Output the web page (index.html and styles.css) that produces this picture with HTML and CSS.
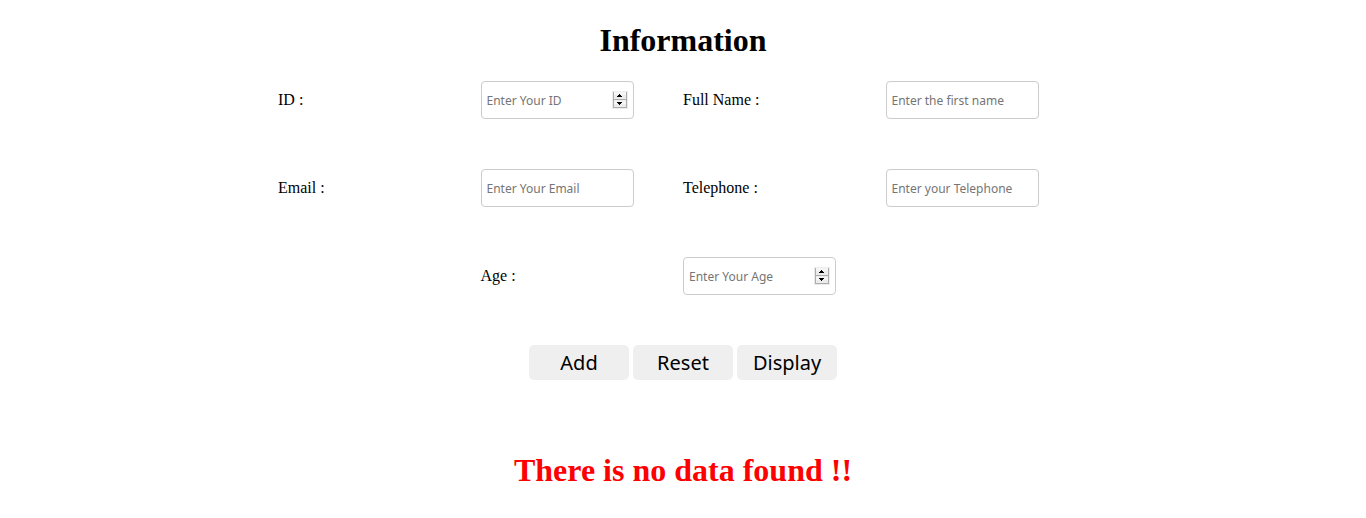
FILE: index.html
```html
<!DOCTYPE html>
<html lang="en">
<head>
<meta charset="utf-8">
<title>Information</title>
<meta name="viewport" content="width=device-width, initial-scale=1">
<link rel="stylesheet" href="styles.css">
</head>
<body>
<h1 class="title">Information</h1>
<form class="form">
  <div class="fields">
    <label for="id">ID :</label>
    <div class="field">
      <input class="input" id="id" type="number" placeholder="Enter Your ID">
      <svg class="spinner" width="16" height="18" viewBox="0 0 16 18" shape-rendering="crispEdges" aria-hidden="true">
        <path fill="#ececec" d="M0 0h16v18H0z"/>
        <path fill="#f5f5f5" d="M2 1h12v3H2zM2 10h12v3H2z"/>
        <path fill="#adadad" d="M1 1h1v16H1zM14 1h1v16h-1zM1 8h14v1H1zM1 16h14v1H1z"/>
        <path fill="#000" d="M7 3h1v1H7zM6 4h3v1H6zM5 5h5v1H5zM5 11h5v1H5zM6 12h3v1H6zM7 13h1v1H7z"/>
      </svg>
    </div>
    <label for="name">Full Name :</label>
    <div class="field"><input class="input" id="name" type="text" placeholder="Enter the first name"></div>
    <label for="email">Email :</label>
    <div class="field"><input class="input" id="email" type="email" placeholder="Enter Your Email"></div>
    <label for="phone">Telephone :</label>
    <div class="field"><input class="input" id="phone" type="tel" placeholder="Enter your Telephone"></div>
    <label class="second-column" for="age">Age :</label>
    <div class="field">
      <input class="input" id="age" type="number" placeholder="Enter Your Age">
      <svg class="spinner" width="16" height="18" viewBox="0 0 16 18" shape-rendering="crispEdges" aria-hidden="true">
        <path fill="#ececec" d="M0 0h16v18H0z"/>
        <path fill="#f5f5f5" d="M2 1h12v3H2zM2 10h12v3H2z"/>
        <path fill="#adadad" d="M1 1h1v16H1zM14 1h1v16h-1zM1 8h14v1H1zM1 16h14v1H1z"/>
        <path fill="#000" d="M7 3h1v1H7zM6 4h3v1H6zM5 5h5v1H5zM5 11h5v1H5zM6 12h3v1H6zM7 13h1v1H7z"/>
      </svg>
    </div>
  </div>
  <div class="actions">
    <button class="button" type="button">Add</button>
    <button class="button" type="reset">Reset</button>
    <button class="button" type="button">Display</button>
  </div>
</form>
<h1 class="message">There is no data found !!</h1>
</body>
</html>
```
FILE: styles.css
```css
body {
  margin: 0 8px;
  background: #fff;
  color: #000;
  font: 16px/18px "Liberation Serif", "Times New Roman", serif;
}

.title,
.message {
  margin: 22px 0;
  font-size: 32px;
  line-height: 37px;
  text-align: center;
}

.message {
  margin-top: 72px;
  color: #f00;
}

.fields {
  display: grid;
  grid-template-columns: repeat(4, 1fr);
  row-gap: 50px;
  align-items: center;
  width: 60%;
  margin: 0 auto;
}

.second-column {
  grid-column: 2;
}

.field {
  position: relative;
  width: 153px;
}

.input {
  display: block;
  box-sizing: border-box;
  width: 100%;
  height: 38px;
  padding: 0 5px;
  border: 1px solid #ccc;
  border-radius: 4px;
  background: #fff;
  font: 12px "Noto Sans", sans-serif;
  appearance: textfield;
}

.input::placeholder {
  color: #757575;
}

.input::-webkit-inner-spin-button {
  display: none;
}

.spinner {
  position: absolute;
  top: 10px;
  right: 6px;
  pointer-events: none;
}

.actions {
  display: flex;
  justify-content: center;
  gap: 4px;
  margin-top: 50px;
}

.button {
  width: 100px;
  height: 35px;
  padding: 0;
  border: 0;
  border-radius: 5px;
  background: #efefef;
  color: #000;
  font: 20px "Noto Sans", sans-serif;
}
```
